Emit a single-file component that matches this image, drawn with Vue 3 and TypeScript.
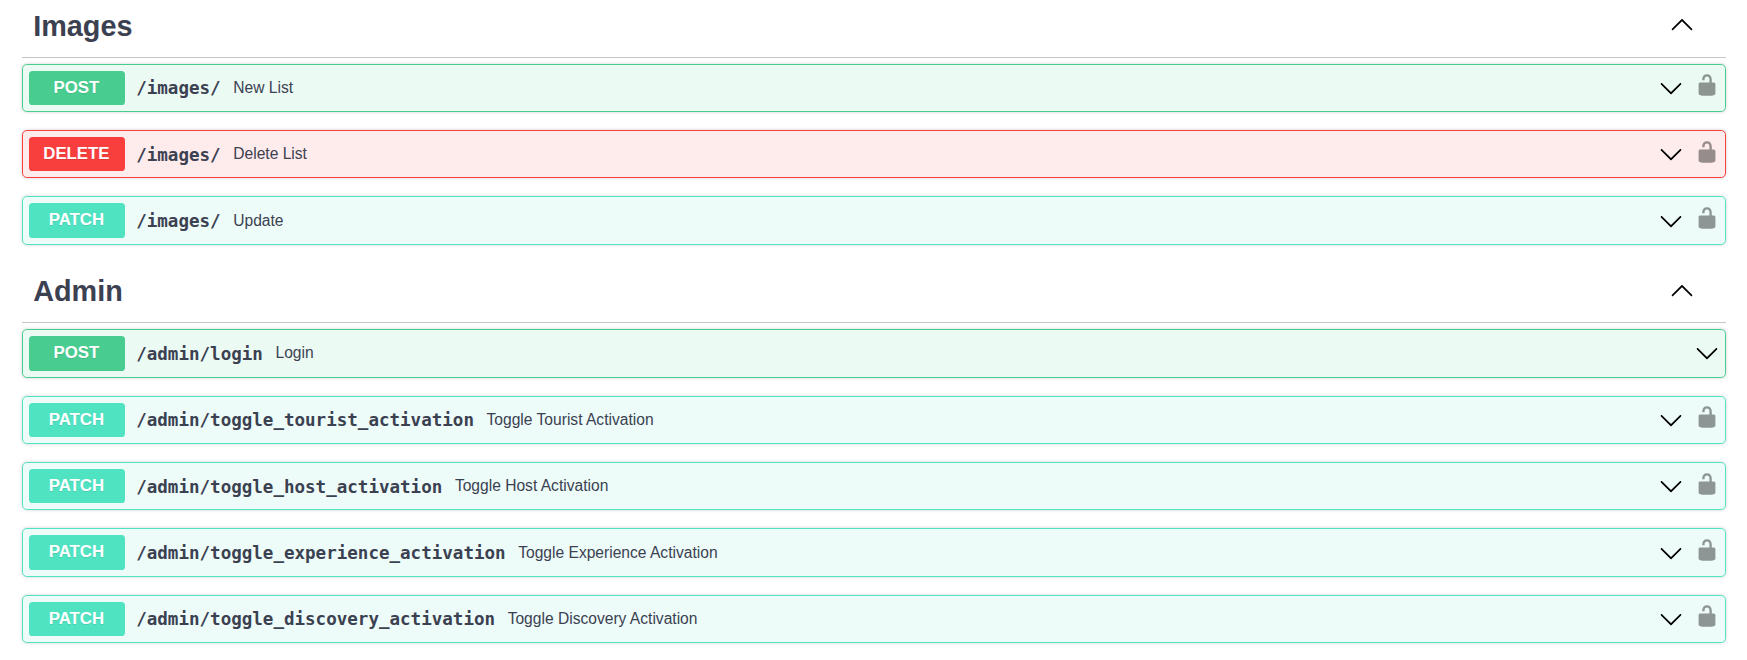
<script setup lang="ts">
interface Operation {
  method: 'post' | 'delete' | 'patch'
  path: string
  summary: string
  secured: boolean
}

interface Section {
  name: string
  operations: Operation[]
}

const sections: Section[] = [
  {
    name: 'Images',
    operations: [
      { method: 'post', path: '/images/', summary: 'New List', secured: true },
      { method: 'delete', path: '/images/', summary: 'Delete List', secured: true },
      { method: 'patch', path: '/images/', summary: 'Update', secured: true },
    ],
  },
  {
    name: 'Admin',
    operations: [
      { method: 'post', path: '/admin/login', summary: 'Login', secured: false },
      { method: 'patch', path: '/admin/toggle_tourist_activation', summary: 'Toggle Tourist Activation', secured: true },
      { method: 'patch', path: '/admin/toggle_host_activation', summary: 'Toggle Host Activation', secured: true },
      { method: 'patch', path: '/admin/toggle_experience_activation', summary: 'Toggle Experience Activation', secured: true },
      { method: 'patch', path: '/admin/toggle_discovery_activation', summary: 'Toggle Discovery Activation', secured: true },
    ],
  },
]
</script>

<template>
  <main class="api">
    <section v-for="section in sections" :key="section.name">
      <header class="tag">
        <h3 class="tag-name">{{ section.name }}</h3>
        <svg class="arrow" viewBox="0 0 20 20" aria-hidden="true">
          <path d="M17.418 14.908c.272.268.709.268.979 0s.271-.701 0-.969l-7.908-7.83c-.27-.268-.707-.268-.979 0l-7.908 7.83c-.27.268-.271.701 0 .969s.709.268.979 0L10 7.767z" />
        </svg>
      </header>
      <div class="operations">
        <div v-for="op in section.operations" :key="op.method + op.path" class="op" :class="op.method">
          <span class="method">{{ op.method.toUpperCase() }}</span>
          <span class="path">{{ op.path }}</span>
          <span class="summary">{{ op.summary }}</span>
          <svg class="arrow" viewBox="0 0 20 20" aria-hidden="true">
            <path d="M17.418 6.109c.272-.268.709-.268.979 0s.271.701 0 .969l-7.908 7.83c-.27.268-.707.268-.979 0l-7.908-7.83c-.27-.268-.271-.701 0-.969s.709-.268.979 0L10 13.25z" />
          </svg>
          <svg v-if="op.secured" class="lock" viewBox="0 0 20 20" aria-hidden="true">
            <path d="M15.8 8H14V5.6C14 2.703 12.665 1 10 1 7.334 1 6 2.703 6 5.6V6h2v-.801C8 3.754 8.797 3 10 3c1.203 0 2 .754 2 2.199V8H4c-.553 0-1 .646-1 1.199V17c0 .549.428 1.139.951 1.307l1.197.387C5.672 18.861 6.55 19 7.1 19h5.8c.549 0 1.428-.139 1.951-.307l1.196-.387c.524-.167.953-.757.953-1.306V9.199C17 8.646 16.352 8 15.8 8z" />
          </svg>
        </div>
      </div>
    </section>
  </main>
</template>

<style>
body {
  background: #fff;
}
</style>

<style scoped>
.api {
  margin: -2.8px 21px 0 22px;
  color: #3b4151;
  font-family: "Liberation Sans", Arial, sans-serif;
}

.tag {
  display: flex;
  align-items: center;
  box-sizing: border-box;
  height: 60.4px;
  margin-bottom: 6px;
  padding: 0 32px 5px 11.2px;
  border-bottom: 1px solid rgba(59, 65, 81, 0.3);
}

.tag-name {
  flex: 1;
  margin: 3px 0 0;
  font-size: 28.8px;
  font-weight: 700;
  line-height: 34px;
}

.operations {
  display: flex;
  flex-direction: column;
  gap: 18px;
  padding-bottom: 18px;
}

.op {
  --tone: 80, 227, 194;
  display: flex;
  align-items: center;
  box-sizing: border-box;
  height: 48.4px;
  padding: 0 6px;
  border: 1px solid rgb(var(--tone));
  border-radius: 4.8px;
  background: rgba(var(--tone), 0.1);
  box-shadow: 0 0 3.6px rgba(0, 0, 0, 0.19);
}

.post {
  --tone: 73, 204, 144;
}

.delete {
  --tone: 249, 62, 62;
}

.method {
  width: 96px;
  border-radius: 3.6px;
  background: rgb(var(--tone));
  color: #fff;
  font-size: 16.8px;
  font-weight: 700;
  line-height: 34.4px;
  height: 34.4px;
  text-align: center;
  text-indent: -1.2px;
  text-shadow: 0 1.2px 0 rgba(0, 0, 0, 0.1);
}

.path {
  margin: 1px 12.6px 0 11.2px;
  font-family: "DejaVu Sans Mono", monospace;
  font-size: 17.54px;
  font-weight: 700;
  white-space: nowrap;
}

.summary {
  flex: 1;
  font-size: 15.6px;
  white-space: nowrap;
}

.arrow {
  flex: none;
  width: 24px;
  height: 24px;
  fill: #000;
}

.lock {
  flex: none;
  width: 24px;
  height: 24px;
  margin: 0 0 5.2px 12px;
  opacity: 0.4;
}
</style>
